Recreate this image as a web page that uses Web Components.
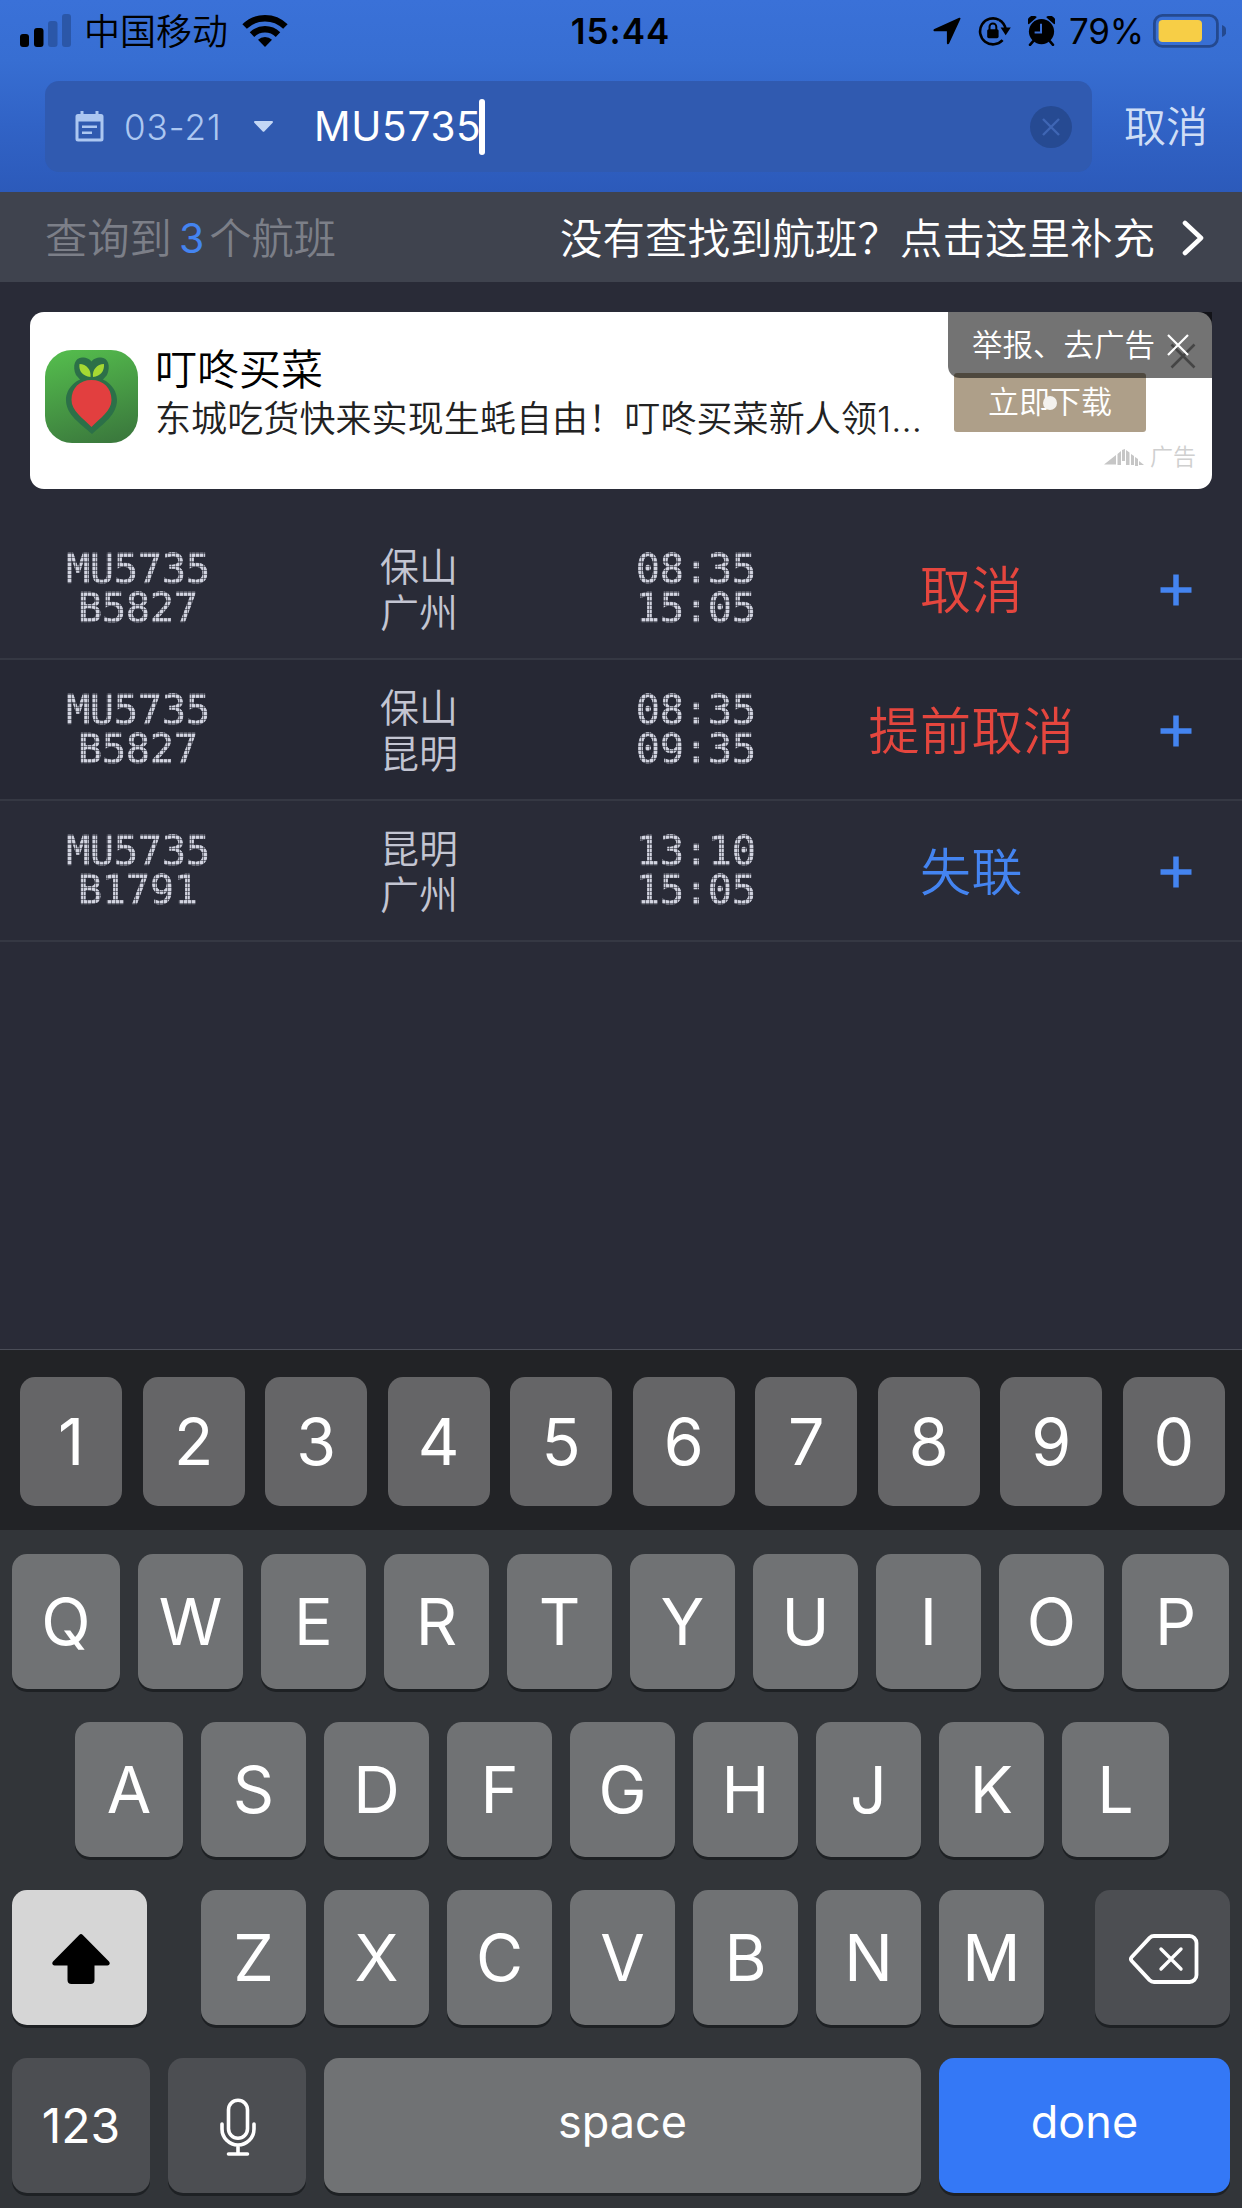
<!DOCTYPE html>
<html lang="zh-CN">
<head>
<meta charset="utf-8">
<title>航班查询</title>
<style>
  html, body { margin: 0; }
  body {
    width: 1242px;
    height: 2208px;
    overflow: hidden;
    background: #292b37;
    font-family: Inter, "Noto Sans CJK SC", sans-serif;
  }
</style>
</head>
<body>
<flight-app>
  <status-bar slot="header" carrier="中国移动" time="15:44" battery="79%"></status-bar>
  <search-bar slot="header" date="03-21" query="MU5735">取消</search-bar>
  <result-bar count="3">没有查找到航班？点击这里补充</result-bar>
  <ad-card name="叮咚买菜" action="立即下载">东城吃货快来实现生蚝自由！叮咚买菜新人领1...</ad-card>
  <flight-row code="MU5735" reg="B5827" from="保山" to="广州" dep="08:35" arr="15:05" tone="red">取消</flight-row>
  <flight-row code="MU5735" reg="B5827" from="保山" to="昆明" dep="08:35" arr="09:35" tone="red">提前取消</flight-row>
  <flight-row code="MU5735" reg="B1791" from="昆明" to="广州" dep="13:10" arr="15:05" tone="blue">失联</flight-row>
  <phone-keyboard slot="keyboard"></phone-keyboard>
</flight-app>

<script>
// Shared base: attaches an open root and fills it with the element's markup
class BaseElement extends HTMLElement {
  constructor() {
    super();
    this.attachShadow({ mode: "open" });
  }

  connectedCallback() {
    this.shadowRoot.innerHTML = this.render();
  }

  attr(name) {
    return this.getAttribute(name) ?? "";
  }
}

// <flight-app> : blue header, list, keyboard at the bottom
class FlightApp extends BaseElement {
  render() {
    return `
      <style>
        :host { display: flex; flex-direction: column; height: 2208px; }
        header {
          display: flex;
          flex-direction: column;
          flex: none;
          height: 192px;
          background: linear-gradient(#3a71d8, #376ed2 32%, #3163c6 65%, #2c5aba);
        }
        main { flex: 1; min-height: 0; }
      </style>
      <header><slot name="header"></slot></header>
      <main><slot></slot></main>
      <slot name="keyboard"></slot>
    `;
  }
}
customElements.define("flight-app", FlightApp);

// <status-bar> : signal, carrier, clock, battery
class StatusBar extends BaseElement {
  render() {
    return `
      <style>
        :host {
          display: grid;
          grid-template-columns: 1fr auto 1fr;
          align-items: center;
          height: 62px;
          padding: 0 16px 0 20px;
          color: #000;
          font-size: 35px;
          line-height: 62px;
        }
        div { display: flex; align-items: center; }
        svg { display: block; flex: none; }
        .carrier { font-size: 36px; margin: 0 14px 0 13px; padding-top: 2px; line-height: 60px; font-weight: 350; }
        .time { font-weight: 600; letter-spacing: 1px; margin-left: -5px; }
        .right { justify-content: flex-end; }
        .pct { margin: 0 9px 0 14px; letter-spacing: -0.2px; }
      </style>
      <div>
        <svg width="51" height="34" viewBox="0 0 51 34">
          <rect x="0" y="20" width="9" height="13" rx="3"/>
          <rect x="14" y="14" width="9.5" height="19" rx="3"/>
          <g fill="#2b57a8">
            <rect x="28" y="7" width="9.5" height="26" rx="3"/>
            <rect x="42" y="0" width="9" height="33" rx="3"/>
          </g>
        </svg>
        <span class="carrier">${this.attr("carrier")}</span>
        <svg width="46" height="34" viewBox="0 0 46 34">
          <g fill="none" stroke="#000" stroke-width="6.4">
            <path d="M2.6 12.6a29 29 0 0 1 40.8 0"/>
            <path d="M10 20.6a18.6 18.6 0 0 1 26 0"/>
          </g>
          <path d="M23 33l-7-7.2a10 10 0 0 1 14 0z"/>
        </svg>
      </div>
      <div class="time">${this.attr("time")}</div>
      <div class="right">
        <svg width="28" height="28" viewBox="0 0 28 28">
          <path d="M26.2.7c.9-.3 1.600.4 1.200 1.300L16.200 26.300c-.7 1.500-2.300 1.200-2.300-.4V14.300H1.900c-1.600 0-2-1.600-.5-2.300z"/>
        </svg>
        <svg width="33" height="30" viewBox="0 0 33 30" style="margin-left:17px">
          <path d="M21 3.800A13 13 0 1 0 24.600 24.200" fill="none" stroke="#000" stroke-width="2.600"/>
          <path d="M21 3.800A13 13 0 0 1 27.600 13" fill="none" stroke="#000" stroke-width="2.600"/>
          <path d="M22.600 11.600h10.200l-5.100 7.600z"/>
          <rect x="9.200" y="13.200" width="11.400" height="9" rx="1.600"/>
          <path d="M11.500 14v-3.200a3.400 3.400 0 0 1 6.800 0V14" fill="none" stroke="#000" stroke-width="2"/>
        </svg>
        <svg width="27" height="30" viewBox="0 0 27 30" style="margin-left:17px">
          <circle cx="13.500" cy="15.600" r="12.600"/>
          <path d="M.6 7.400A5 5 0 0 1 7.800 1.200zM26.400 7.400A5 5 0 0 0 19.200 1.200z" stroke="#000" stroke-width="1.400" stroke-linejoin="round"/>
          <path d="M5 25.400l-3 3.400M22 25.400l3 3.400" stroke="#000" stroke-width="2.600" stroke-linecap="round"/>
          <path d="M13 7.800v8.600H6.600" fill="none" stroke="#3a6fd3" stroke-width="2"/>
        </svg>
        <span class="pct">${this.attr("battery")}</span>
        <svg width="73" height="34" viewBox="0 0 73 34">
          <rect x="1.400" y="1.400" width="63" height="31" rx="8" fill="none" stroke="#24498f" stroke-width="2.800"/>
          <rect x="5.600" y="6" width="43.400" height="22" rx="4" fill="#f7ce46"/>
          <path d="M69 11c3 1.200 4.400 3.400 4.400 6s-1.400 4.800-4.400 6z" fill="#24498f"/>
        </svg>
      </div>
    `;
  }
}
customElements.define("status-bar", StatusBar);

// <search-bar> : date picker + query field, cancel label in the slot
class SearchBar extends BaseElement {
  render() {
    return `
      <style>
        :host { display: flex; align-items: center; padding: 19px 0 0 45px; }
        .box {
          display: flex;
          align-items: center;
          box-sizing: border-box;
          width: 1047px;
          height: 91px;
          padding: 0 20px 0 30px;
          border-radius: 14px;
          background: #305ab0;
        }
        svg { display: block; flex: none; }
        .date { width: 130px; margin-left: 20px; font-size: 35px; font-weight: 350; letter-spacing: 1px; color: #acc7f1; }
        .query { margin-left: 41px; font-size: 40.5px; color: #fff; letter-spacing: 0.7px; }
        .caret { width: 6px; height: 56px; margin-left: -2px; border-radius: 3px; background: #fff; }
        .clear { margin-left: auto; }
        .cancel { margin-left: 32px; font-size: 42px; font-weight: 350; line-height: 91px; color: #cfdef6; }
      </style>
      <div class="box">
        <svg width="29" height="31" viewBox="0 0 29 31">
          <path d="M7 0v5M22 0v5" stroke="#acc7f1" stroke-width="3"/>
          <path d="M3 3h23a2.500 2.500 0 0 1 2.500 2.500v22.500a2.500 2.500 0 0 1-2.500 2.500H3A2.500 2.500 0 0 1 .5 28V5.500A2.500 2.500 0 0 1 3 3zM3.500 10.500V27.500h22V10.500z" fill="#acc7f1" fill-rule="evenodd"/>
          <path d="M7 15.700h15M7 21.700h10" stroke="#acc7f1" stroke-width="2.600"/>
        </svg>
        <span class="date">${this.attr("date")}</span>
        <svg width="19" height="11" viewBox="0 0 19 11"><path d="M1 0h17a1 1 0 0 1 .7 1.700l-8.200 8.600a1.400 1.400 0 0 1-2 0L.3 1.700A1 1 0 0 1 1 0z" fill="#c4d7f5"/></svg>
        <span class="query">${this.attr("query")}</span>
        <span class="caret"></span>
        <svg class="clear" width="42" height="42" viewBox="0 0 42 42">
          <circle cx="21" cy="21" r="21" fill="#264a92"/>
          <path d="M13 13l16 16M29 13L13 29" stroke="#3f66b4" stroke-width="2.400"/>
        </svg>
      </div>
      <span class="cancel"><slot></slot></span>
    `;
  }
}
customElements.define("search-bar", SearchBar);

// <result-bar> : number of hits and the "add it here" link
class ResultBar extends BaseElement {
  render() {
    return `
      <style>
        :host {
          display: flex;
          align-items: center;
          box-sizing: border-box;
          height: 90px;
          padding: 1px 37px 0 45px;
          background: #3f434e;
          color: #7c7f88;
          font-size: 42.3px;
          font-weight: 350;
          line-height: 88px;
        }
        span { padding-top: 2px; }
        b { margin: 0 5px 0 7px; font-weight: 400; font-size: 41px; color: #4484f0; }
        .more { margin-left: auto; font-size: 42.5px; color: #fff; }
        svg { margin-left: 26px; }
      </style>
      <span>查询到</span><b>${this.attr("count")}</b><span>个航班</span>
      <span class="more"><slot></slot></span>
      <svg width="24" height="36" viewBox="0 0 24 36">
        <path d="M4 3l16 15L4 33" fill="none" stroke="#fff" stroke-width="4.600" stroke-linecap="round" stroke-linejoin="round"/>
      </svg>
    `;
  }
}
customElements.define("result-bar", ResultBar);

// <ad-card> : banner; the report tag lies over its top right corner
class AdCard extends BaseElement {
  render() {
    return `
      <style>
        :host {
          position: relative;
          display: flex;
          box-sizing: border-box;
          height: 177px;
          margin: 30px;
          padding-left: 15px;
          border-radius: 14px;
          background: #fff;
        }
        svg { display: block; flex: none; }
        .logo { margin-top: 38px; }
        .text { display: flex; flex-direction: column; width: 770px; margin: 34px 0 0 17px; white-space: nowrap; }
        .name { font-size: 42px; font-weight: 350; line-height: 48px; color: #000; }
        .desc { font-size: 36px; font-weight: 350; line-height: 50px; letter-spacing: 0.1px; color: #222; }
        .side { display: flex; flex-direction: column; align-items: flex-start; width: 258px; margin: 61px 0 0 auto; }
        .btn {
          position: relative;
          width: 192px;
          height: 59px;
          border-radius: 3px;
          background: #ae9f89;
          color: #fff;
          font-size: 31px;
          font-weight: 350;
          line-height: 58px;
          text-align: center;
        }
        .btn::after {
          content: "";
          position: absolute;
          left: 89px;
          top: 23px;
          width: 14px;
          height: 14px;
          border-radius: 50%;
          background: #f4f2ee;
        }
        .mark { display: flex; align-items: center; gap: 6px; margin: 12px 0 0 150px; color: #cfcfcf; font-size: 23px; line-height: 26px; font-weight: 350; }
        .under { position: absolute; right: 16px; top: 31px; }
        .report {
          position: absolute;
          right: 0;
          top: 0;
          display: flex;
          align-items: center;
          box-sizing: border-box;
          width: 264px;
          height: 66px;
          padding-left: 24px;
          border-radius: 0 0 0 12px;
          background: rgba(0, 0, 0, 0.55);
          color: #fff;
          font-size: 30.5px;
          font-weight: 350;
          line-height: 66px;
          white-space: nowrap;
        }
        .report svg { margin-left: 12px; }
      </style>
      <svg class="logo" width="93" height="93" viewBox="0 0 93 93">
        <defs>
          <linearGradient id="g" x1="0.35" y1="0" x2="0.65" y2="1">
            <stop offset="0" stop-color="#53b94c"/>
            <stop offset="1" stop-color="#3b7a3d"/>
          </linearGradient>
        </defs>
        <rect width="93" height="93" rx="27" fill="url(#g)"/>
        <g fill="#2c7048">
          <path d="M31 25c-4-9-1-17.500 6-17.500 5 0 8 2 9.500 4 1.500-2 4.500-4 9.500-4 7 0 10 8.500 6 17.500l-7 8H38z"/>
          <path d="M47 84C36 74 21 65 21 50c0-12 11-23 25.500-23S72 38 72 50c0 15-14 24-25 34z"/>
        </g>
        <path d="M46.500 77C38 68 26.500 61 26.500 50c0-12 8-20 20-20s20 8 20 20c0 11-11.500 18-20 27z" fill="#e23f3f"/>
        <path d="M45.500 27c-8-1-12-6-11-13 7 0 12 6 11 13zM48 27c8-1 11.500-6 11-13-7 0-12 6-11 13z" fill="#a5d933"/>
      </svg>
      <div class="text">
        <span class="name">${this.attr("name")}</span>
        <span class="desc"><slot></slot></span>
      </div>
      <div class="side">
        <div class="btn">${this.attr("action")}</div>
        <div class="mark">
          <svg width="40" height="17" viewBox="0 0 40 17" fill="#c6c6c6">
            <path d="M0 15.500L12 6v9.500zM13.500 5L17 2v14h-3.500zM18 1l3-1v12h-3zM22 1l3.500 2.500V16H22zM27 5l3 2v9h-3zM31 8l3 2v7h-3zM35 12l5 4h-5z"/>
          </svg>
          <span>广告</span>
        </div>
      </div>
      <svg class="under" width="26" height="26" viewBox="0 0 26 26"><path d="M1.500 1.500l23 23M24.500 1.500l-23 23" stroke="#999" stroke-width="2.600"/></svg>
      <div class="report">
        <span>举报、去广告</span>
        <svg width="22" height="22" viewBox="0 0 22 22"><path d="M1 1l20 20M21 1L1 21" stroke="#fff" stroke-width="2.200"/></svg>
      </div>
    `;
  }
}
customElements.define("ad-card", AdCard);

// <dot-text> : board style text, a grid mask splits the glyphs into dots
class DotText extends BaseElement {
  render() {
    return `
      <style>
        :host {
          display: block;
          font: 40px/39px "DejaVu Sans Mono", monospace;
          letter-spacing: -0.08px;
          color: #d2d4e0;
          -webkit-text-stroke: 0.7px #d2d4e0;
          -webkit-mask:
            repeating-linear-gradient(90deg, #000 0 3px, rgba(0, 0, 0, 0.45) 3px 4px),
            repeating-linear-gradient(#000 0 3px, rgba(0, 0, 0, 0.45) 3px 4.2px);
          -webkit-mask-composite: source-in;
          mask-composite: intersect;
        }
      </style>
      <slot></slot>
    `;
  }
}
customElements.define("dot-text", DotText);

// <flight-row> : one flight, status text in the slot
class FlightRow extends BaseElement {
  render() {
    return `
      <style>
        :host {
          display: grid;
          grid-template-columns: 276px 286px 268px 282px 130px;
          align-items: center;
          box-sizing: border-box;
          height: 141px;
          border-bottom: 2px solid #353843;
          text-align: center;
          font-weight: 350;
        }
        :host(:nth-of-type(even)) { background: #262834; }
        .city { padding-top: 3px; font-size: 39px; line-height: 46px; color: #c3c5d2; }
        .status { padding: 5px 0 0 1px; font-size: 51px; letter-spacing: 0.5px; line-height: 60px; color: #e5463e; }
        :host([tone="blue"]) .status { color: #4484f0; }
        svg { display: block; margin: 2px 0 0 48px; }
      </style>
      <div><dot-text>${this.attr("code")}</dot-text><dot-text>${this.attr("reg")}</dot-text></div>
      <div class="city">${this.attr("from")}<br>${this.attr("to")}</div>
      <div><dot-text>${this.attr("dep")}</dot-text><dot-text>${this.attr("arr")}</dot-text></div>
      <div class="status"><slot></slot></div>
      <svg width="32" height="32" viewBox="0 0 32 32"><path d="M16 0.500v31M0.500 16h31" stroke="#4484f0" stroke-width="5.500"/></svg>
    `;
  }
}
customElements.define("flight-row", FlightRow);

// <key-cap kind="num | letter | dark | shift | done">
class KeyCap extends BaseElement {
  render() {
    return `
      <style>
        :host {
          display: flex;
          align-items: center;
          justify-content: center;
          box-sizing: border-box;
          height: 135px;
          border-radius: 15px;
          background: #707274;
          box-shadow: 0 3px 0 #1e2124;
          color: #fff;
          font-size: 64.5px;
          font-weight: 400;
        }
        :host([kind="num"]) { height: 129px; background: #656567; box-shadow: none; }
        :host([kind="dark"]) { background: #4c4e52; }
        :host([kind="shift"]) { background: #d6d6d6; }
        :host([kind="done"]) { background: #3478f6; }
        :host([size="word"]) { padding-bottom: 8px; font-size: 45px; }
        :host([size="code"]) { font-size: 48px; }
        ::slotted(svg) { display: block; margin: 2px 0 0 2px; }
      </style>
      <slot></slot>
    `;
  }
}
customElements.define("key-cap", KeyCap);

// <phone-keyboard> : number strip and the four key rows
class PhoneKeyboard extends BaseElement {
  keys(chars, kind = "letter") {
    return [...chars].map((c) => `<key-cap kind="${kind}">${c}</key-cap>`).join("");
  }

  render() {
    return `
      <style>
        :host { display: block; flex: none; height: 859px; background: #323539; }
        .nums {
          display: grid;
          grid-template-columns: repeat(10, 1fr);
          gap: 20.3px;
          box-sizing: border-box;
          height: 181px;
          padding: 27px 17px 0 20px;
          border-top: 1px solid #4a4d57;
          background: #222326;
        }
        .row { display: grid; column-gap: 18px; margin: 0 12px 33px; }
        .top { grid-template-columns: 108px repeat(8, 105px) 107px; margin-top: 24px; }
        .home { grid-template-columns: 108px repeat(7, 105px) 107px; margin-left: 75px; }
        .low { grid-template-columns: 135px 18px repeat(7, 105px) 15px 135px; }
        .last { grid-template-columns: 138px 138px 597px 291px; margin-bottom: 0; }
      </style>
      <div class="nums">${this.keys("1234567890", "num")}</div>
      <div class="row top">${this.keys("QWERTYUIOP")}</div>
      <div class="row home">${this.keys("ASDFGHJKL")}</div>
      <div class="row low">
        <key-cap kind="shift">
          <svg width="58" height="50" viewBox="0 0 58 50"><path d="M27.200 1a2.500 2.500 0 0 1 3.600 0L57 27.500c1.500 1.700.6 4-1.600 4H42.500V46a4 4 0 0 1-4 4h-19a4 4 0 0 1-4-4V31.500H2.600c-2.200 0-3.100-2.300-1.600-4z"/></svg>
        </key-cap>
        <span></span>${this.keys("ZXCVBNM")}<span></span>
        <key-cap kind="dark">
          <svg width="70" height="52" viewBox="0 0 70 52" fill="none" stroke="#fff" stroke-width="3.800" stroke-linecap="round" stroke-linejoin="round">
            <path d="M25 3h35.500a7 7 0 0 1 7 7v32a7 7 0 0 1-7 7H25c-1.800 0-3.200-.7-4.400-1.900L2.800 28a3 3 0 0 1 0-4L20.600 4.900C21.800 3.700 23.200 3 25 3z"/>
            <path d="M32 16l20 20M52 16L32 36" stroke-width="3.400"/>
          </svg>
        </key-cap>
      </div>
      <div class="row last">
        <key-cap kind="dark" size="code">123</key-cap>
        <key-cap kind="dark">
          <svg width="36" height="58" viewBox="0 0 36 58" fill="none" stroke="#fff" stroke-width="3.600" stroke-linecap="round">
            <rect x="8.500" y="2.300" width="19" height="38" rx="9.500"/>
            <path d="M2 26v5a16 16 0 0 0 32 0v-5M18 47v9M8.500 56h19"/>
          </svg>
        </key-cap>
        <key-cap size="word">space</key-cap>
        <key-cap kind="done" size="word">done</key-cap>
      </div>
    `;
  }
}
customElements.define("phone-keyboard", PhoneKeyboard);
</script>
</body>
</html>
